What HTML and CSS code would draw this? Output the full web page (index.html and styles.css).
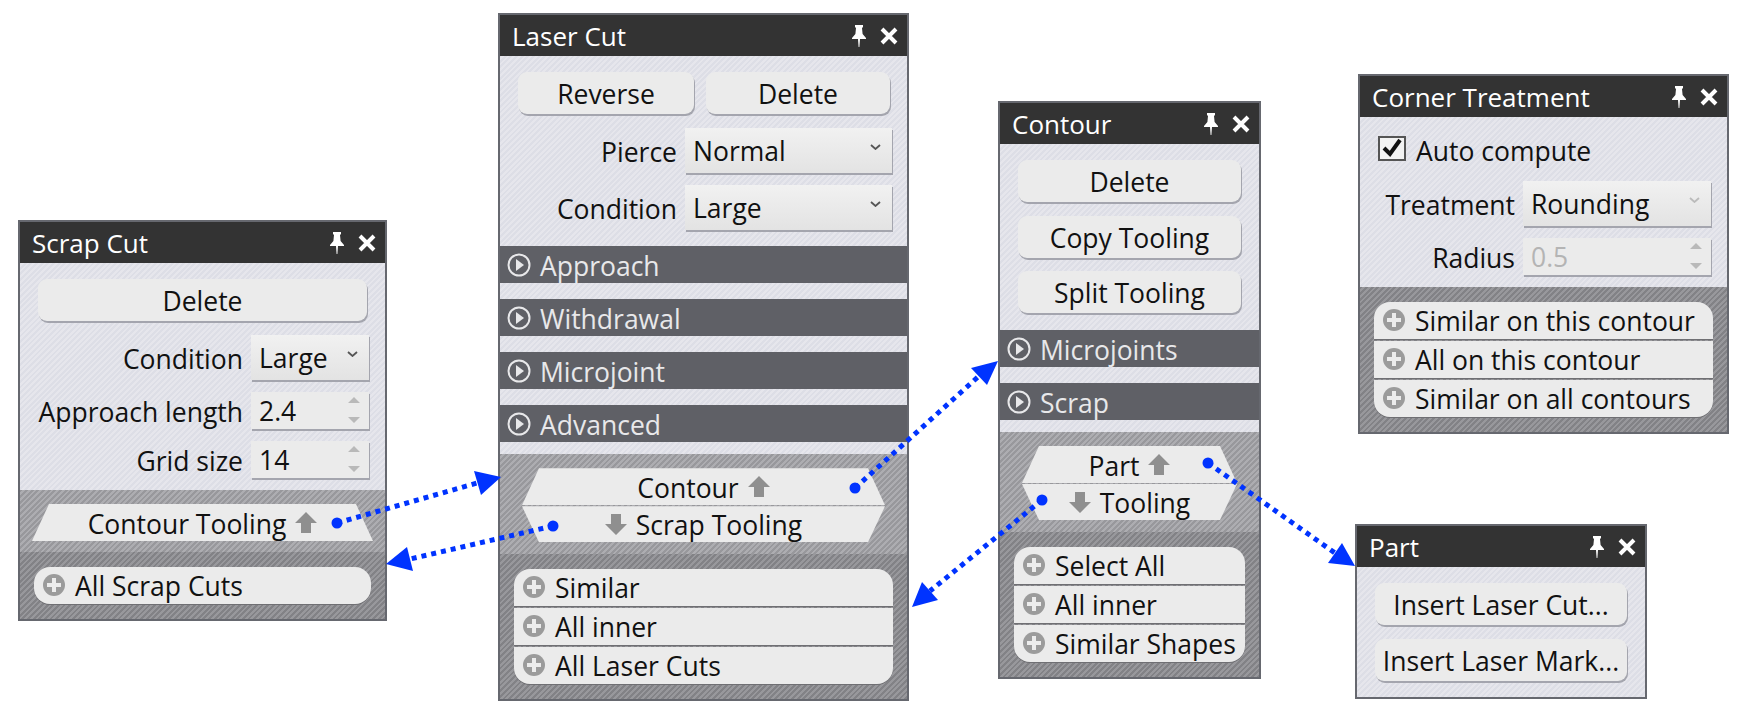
FILE: index.html
```html
<!DOCTYPE html>
<html lang="en">
<head>
  <meta charset="UTF-8">
  <title>Contextual Panels</title>
  <link rel="stylesheet" href="styles.css">
</head>
<body>
  <svg class="icon-defs" aria-hidden="true">
    <symbol id="i-pin" viewBox="0 0 14 22"><path d="M3 0h8v2l-1 1 .6 6 3.4 4v1H8l-.6 8h-.8L6 14H0v-1l3.400-4L4 3 3 2z"/></symbol>
    <symbol id="i-close" viewBox="0 0 18 18"><path d="M2 2l14 14M16 2L2 16" fill="none" stroke="currentColor" stroke-width="4"/></symbol>
    <symbol id="i-up" viewBox="0 0 22 21"><path d="M11 0l11 11h-6v10H6V11H0z"/></symbol>
    <symbol id="i-down" viewBox="0 0 22 21"><path d="M6 0h10v10h6L11 21 0 10h6z"/></symbol>
    <symbol id="i-plus" viewBox="0 0 22 22"><circle cx="11" cy="11" r="11" fill="#9b9b9b"/><path d="M9 4h4v5h5v4h-5v5H9v-5H4V9h5z" fill="#ececec"/></symbol>
    <symbol id="i-expand" viewBox="0 0 24 24"><circle cx="12" cy="12" r="10.500" fill="none" stroke="currentColor" stroke-width="2"/><path d="M9 6l8 6-8 6z" fill="currentColor"/></symbol>
    <symbol id="i-chevron" viewBox="0 0 11 6"><path d="M1 1l4.500 4L10 1" fill="none" stroke="currentColor" stroke-width="1.800"/></symbol>
    <symbol id="i-spin" viewBox="0 0 12 26"><path d="M6 0l6 6H0zM0 20h12l-6 6z"/></symbol>
  </svg>

  <section class="panel panel-scrap">
    <header class="panel-head">
      <span class="panel-title">Scrap Cut</span>
      <svg class="icon-pin"><use href="#i-pin"/></svg>
      <svg class="icon-close"><use href="#i-close"/></svg>
    </header>
    <div class="panel-body body-short">
      <button class="btn">Delete</button>
      <div class="row row-tall">
        <span class="row-label">Condition</span>
        <div class="field">Large<svg class="icon-chevron"><use href="#i-chevron"/></svg></div>
      </div>
      <div class="row">
        <span class="row-label">Approach length</span>
        <div class="field field-num">2.4<svg class="icon-spin"><use href="#i-spin"/></svg></div>
      </div>
      <div class="row">
        <span class="row-label">Grid size</span>
        <div class="field field-num">14<svg class="icon-spin"><use href="#i-spin"/></svg></div>
      </div>
    </div>
    <div class="panel-nav nav-wide">
      <a class="nav-link nav-up">Contour Tooling<svg class="icon-arrow"><use href="#i-up"/></svg></a>
    </div>
    <div class="panel-apply">
      <a class="apply-item"><svg class="icon-plus"><use href="#i-plus"/></svg>All Scrap Cuts</a>
    </div>
  </section>

  <section class="panel panel-laser">
    <header class="panel-head">
      <span class="panel-title">Laser Cut</span>
      <svg class="icon-pin"><use href="#i-pin"/></svg>
      <svg class="icon-close"><use href="#i-close"/></svg>
    </header>
    <div class="panel-body">
      <div class="btn-pair">
        <button class="btn">Reverse</button>
        <button class="btn">Delete</button>
      </div>
      <div class="row row-tall">
        <span class="row-label">Pierce</span>
        <div class="field">Normal<svg class="icon-chevron"><use href="#i-chevron"/></svg></div>
      </div>
      <div class="row row-tall">
        <span class="row-label">Condition</span>
        <div class="field">Large<svg class="icon-chevron"><use href="#i-chevron"/></svg></div>
      </div>
    </div>
    <div class="fold"><svg class="icon-expand"><use href="#i-expand"/></svg>Approach</div>
    <div class="fold"><svg class="icon-expand"><use href="#i-expand"/></svg>Withdrawal</div>
    <div class="fold"><svg class="icon-expand"><use href="#i-expand"/></svg>Microjoint</div>
    <div class="fold"><svg class="icon-expand"><use href="#i-expand"/></svg>Advanced</div>
    <div class="panel-nav">
      <a class="nav-link nav-up">Contour<svg class="icon-arrow"><use href="#i-up"/></svg></a>
      <a class="nav-link nav-down"><svg class="icon-arrow"><use href="#i-down"/></svg>Scrap Tooling</a>
    </div>
    <div class="panel-apply">
      <a class="apply-item"><svg class="icon-plus"><use href="#i-plus"/></svg>Similar</a>
      <a class="apply-item"><svg class="icon-plus"><use href="#i-plus"/></svg>All inner</a>
      <a class="apply-item"><svg class="icon-plus"><use href="#i-plus"/></svg>All Laser Cuts</a>
    </div>
  </section>

  <section class="panel panel-contour">
    <header class="panel-head">
      <span class="panel-title">Contour</span>
      <svg class="icon-pin"><use href="#i-pin"/></svg>
      <svg class="icon-close"><use href="#i-close"/></svg>
    </header>
    <div class="panel-body">
      <button class="btn">Delete</button>
      <button class="btn">Copy Tooling</button>
      <button class="btn">Split Tooling</button>
    </div>
    <div class="fold"><svg class="icon-expand"><use href="#i-expand"/></svg>Microjoints</div>
    <div class="fold"><svg class="icon-expand"><use href="#i-expand"/></svg>Scrap</div>
    <div class="panel-nav">
      <a class="nav-link nav-up">Part<svg class="icon-arrow"><use href="#i-up"/></svg></a>
      <a class="nav-link nav-down"><svg class="icon-arrow"><use href="#i-down"/></svg>Tooling</a>
    </div>
    <div class="panel-apply">
      <a class="apply-item"><svg class="icon-plus"><use href="#i-plus"/></svg>Select All</a>
      <a class="apply-item"><svg class="icon-plus"><use href="#i-plus"/></svg>All inner</a>
      <a class="apply-item"><svg class="icon-plus"><use href="#i-plus"/></svg>Similar Shapes</a>
    </div>
  </section>

  <section class="panel panel-corner">
    <header class="panel-head">
      <span class="panel-title">Corner Treatment</span>
      <svg class="icon-pin"><use href="#i-pin"/></svg>
      <svg class="icon-close"><use href="#i-close"/></svg>
    </header>
    <div class="panel-body body-short body-check">
      <div class="check">
        <span class="check-box"><svg viewBox="0 0 24 21"><path d="M4 10l6 6L20 2" fill="none" stroke="#111" stroke-width="4"/></svg></span>
        <span class="check-text">Auto compute</span>
      </div>
      <div class="row row-tall">
        <span class="row-label">Treatment</span>
        <div class="field">Rounding<svg class="icon-chevron is-off"><use href="#i-chevron"/></svg></div>
      </div>
      <div class="row">
        <span class="row-label">Radius</span>
        <div class="field field-num is-off">0.5<svg class="icon-spin"><use href="#i-spin"/></svg></div>
      </div>
    </div>
    <div class="panel-apply">
      <a class="apply-item"><svg class="icon-plus"><use href="#i-plus"/></svg>Similar on this contour</a>
      <a class="apply-item"><svg class="icon-plus"><use href="#i-plus"/></svg>All on this contour</a>
      <a class="apply-item"><svg class="icon-plus"><use href="#i-plus"/></svg>Similar on all contours</a>
    </div>
  </section>

  <section class="panel panel-part">
    <header class="panel-head">
      <span class="panel-title">Part</span>
      <svg class="icon-pin"><use href="#i-pin"/></svg>
      <svg class="icon-close"><use href="#i-close"/></svg>
    </header>
    <div class="panel-body">
      <button class="btn">Insert Laser Cut...</button>
      <button class="btn">Insert Laser Mark...</button>
    </div>
  </section>

  <!-- links between the panels -->
  <svg class="links" viewBox="0 0 1740 714" aria-hidden="true">
    <g class="link-line">
      <path d="M337 523L477 483"/>
      <path d="M553 526L410 559"/>
      <path d="M855 488L979 376"/>
      <path d="M1042 500L930 591"/>
      <path d="M1208 463L1335 553"/>
    </g>
    <g class="link-end">
      <circle cx="337" cy="523" r="5.500"/>
      <circle cx="553" cy="526" r="5.500"/>
      <circle cx="855" cy="488" r="5.500"/>
      <circle cx="1042" cy="500" r="5.500"/>
      <circle cx="1208" cy="463" r="5.500"/>
      <path d="M501 477L474 471 481 495z"/>
      <path d="M386 564L407 547 413 571z"/>
      <path d="M998 361L971 368 987 385z"/>
      <path d="M912 607L922 582 938 600z"/>
      <path d="M1355 566L1342 543 1328 563z"/>
    </g>
  </svg>
</body>
</html>
```

FILE: styles.css
```css
html, body {
  margin: 0;
  height: 714px;
  overflow: hidden;
  background: #fff;
}
body {
  position: relative;
  font-family: "Open Sans", "Noto Sans", sans-serif;
  font-size: 26.5px;
  line-height: 36px;
  color: #111;
}
.icon-defs {
  position: absolute;
  width: 0;
  height: 0;
}

/* panels sit on a free canvas */
.panel {
  position: absolute;
  box-sizing: border-box;
  display: flex;
  flex-direction: column;
  border: 2px solid #66686f;
  background: repeating-linear-gradient(135deg, #dddee6 0 2px, #e6e6ec 2px 4px);
}
.panel-scrap { left: 18px; top: 220px; width: 369px; --field-w: 118px; }
.panel-laser { left: 498px; top: 13px; width: 411px; --field-w: 207px; }
.panel-contour { left: 998px; top: 101px; width: 263px; }
.panel-corner { left: 1358px; top: 74px; width: 371px; --field-w: 188px; }
.panel-part { left: 1355px; top: 524px; width: 292px; }

.panel-head {
  display: flex;
  align-items: center;
  height: 41px;
  padding: 0 9px 0 12px;
  background: #333;
  color: #fff;
}
.panel-title {
  flex: 1;
  font-size: 26px;
}
.icon-pin {
  width: 14px;
  height: 22px;
  fill: #fff;
  margin-right: 14px;
}
.icon-close {
  width: 18px;
  height: 18px;
  color: #fff;
}

.panel-body {
  display: flex;
  flex-direction: column;
  gap: 12px;
  padding: 16px 16px 16px 18px;
}
.body-short { padding-bottom: 12px; }
.body-check { padding-top: 19px; }
.panel-laser .panel-body { padding-right: 15px; }
.panel-contour .panel-body { padding-bottom: 17px; }

.btn {
  height: 42px;
  margin-right: 2px;
  padding: 2px 0 0;
  border: 0;
  border-radius: 9px;
  background: #ebebeb;
  box-shadow: 1px 2px 0 #a4a5ae;
  font: inherit;
  color: inherit;
}
.btn + .btn { margin-top: 1.5px; }
.btn-pair {
  display: grid;
  grid-template-columns: 176px 1fr;
  gap: 12px;
  margin-right: 2px;
}
.btn-pair .btn { margin: 0; }

.row {
  display: flex;
  justify-content: flex-end;
  align-items: center;
  gap: 8px;
}
.row-label {
  padding-top: 2px;
  line-height: 32px;
}
.btn + .row, .btn-pair + .row { margin-top: 2px; }
.field {
  position: relative;
  box-sizing: border-box;
  width: var(--field-w);
  height: 37px;
  padding-left: 8px;
  display: flex;
  align-items: center;
  background: #ebebeb;
  box-shadow: 1px 2px 0 #a4a5ae;
}
.row-tall .field {
  height: 45px;
  background: linear-gradient(#f1f1f1, #e3e3e3);
}
.field-num { background: #ebebeb; }
.icon-chevron {
  position: absolute;
  right: 11px;
  top: 16px;
  width: 11px;
  height: 6px;
  color: #555;
}
.icon-chevron.is-off { color: #bbb; }
.icon-spin {
  position: absolute;
  right: 9px;
  top: 5px;
  width: 12px;
  height: 26px;
  fill: #b9b9b9;
}
.is-off { color: #b4b4b4; }

.check {
  display: flex;
  align-items: center;
  gap: 10px;
  height: 25px;
  margin-bottom: 8px;
}
.check-text { padding-top: 4px; }
.check-box {
  box-sizing: border-box;
  flex: none;
  width: 28px;
  height: 25px;
  border: 2px solid #555;
  background: #f2f2f2;
  display: flex;
}
.check-box svg { width: 100%; height: 100%; }

.fold {
  box-sizing: border-box;
  display: flex;
  align-items: center;
  gap: 9px;
  height: 37px;
  margin-bottom: 16.1px;
  padding: 2px 0 0 7px;
  background: #5f6066;
  color: #e8e8ea;
}
.fold:has(+ .panel-nav) { margin-bottom: 12px; }
.icon-expand {
  width: 24px;
  height: 24px;
  margin-top: -2px;
}

.panel-nav {
  display: flex;
  flex-direction: column;
  gap: 1px;
  padding: 14px 22px 12px;
  background: repeating-linear-gradient(135deg, #98989c 0 2px, #adadb1 2px 4px);
}
.nav-wide { padding: 14px 12px 11px; }
.nav-link {
  box-sizing: border-box;
  display: flex;
  justify-content: center;
  align-items: center;
  gap: 9px;
  height: 36px;
  padding-top: 2px;
  background: #ebebeb;
}
.nav-up {
  height: 37px;
  clip-path: polygon(17px 0, calc(100% - 17px) 0, 100% 100%, 0 100%);
}
.nav-down { clip-path: polygon(0 0, 100% 0, calc(100% - 17px) 100%, 17px 100%); }
.icon-arrow {
  width: 22px;
  height: 21px;
  margin-top: -2px;
  fill: #8f8f8f;
}

.panel-apply {
  display: flex;
  flex-direction: column;
  gap: 2px;
  padding: 15px 14px;
  background: repeating-linear-gradient(135deg, #828286 0 2px, #98989c 2px 4px);
}
.apply-item {
  display: flex;
  align-items: center;
  gap: 10px;
  height: 37px;
  padding-left: 9px;
  background: #ebebeb;
  box-shadow: 0 1px 0 #6f6f73;
}
.apply-item:first-child { border-radius: 16px 16px 0 0; }
.apply-item:last-child { border-radius: 0 0 16px 16px; }
.apply-item:only-child { border-radius: 16px; }
.icon-plus {
  width: 22px;
  height: 22px;
  margin-top: -1px;
}

/* dotted links drawn over everything */
.links {
  position: absolute;
  left: 0;
  top: 0;
  width: 1740px;
  height: 714px;
  pointer-events: none;
}
.link-line path {
  fill: none;
  stroke: #0033ff;
  stroke-width: 5;
  stroke-dasharray: 5 5;
}
.link-end { fill: #0033ff; }
```
